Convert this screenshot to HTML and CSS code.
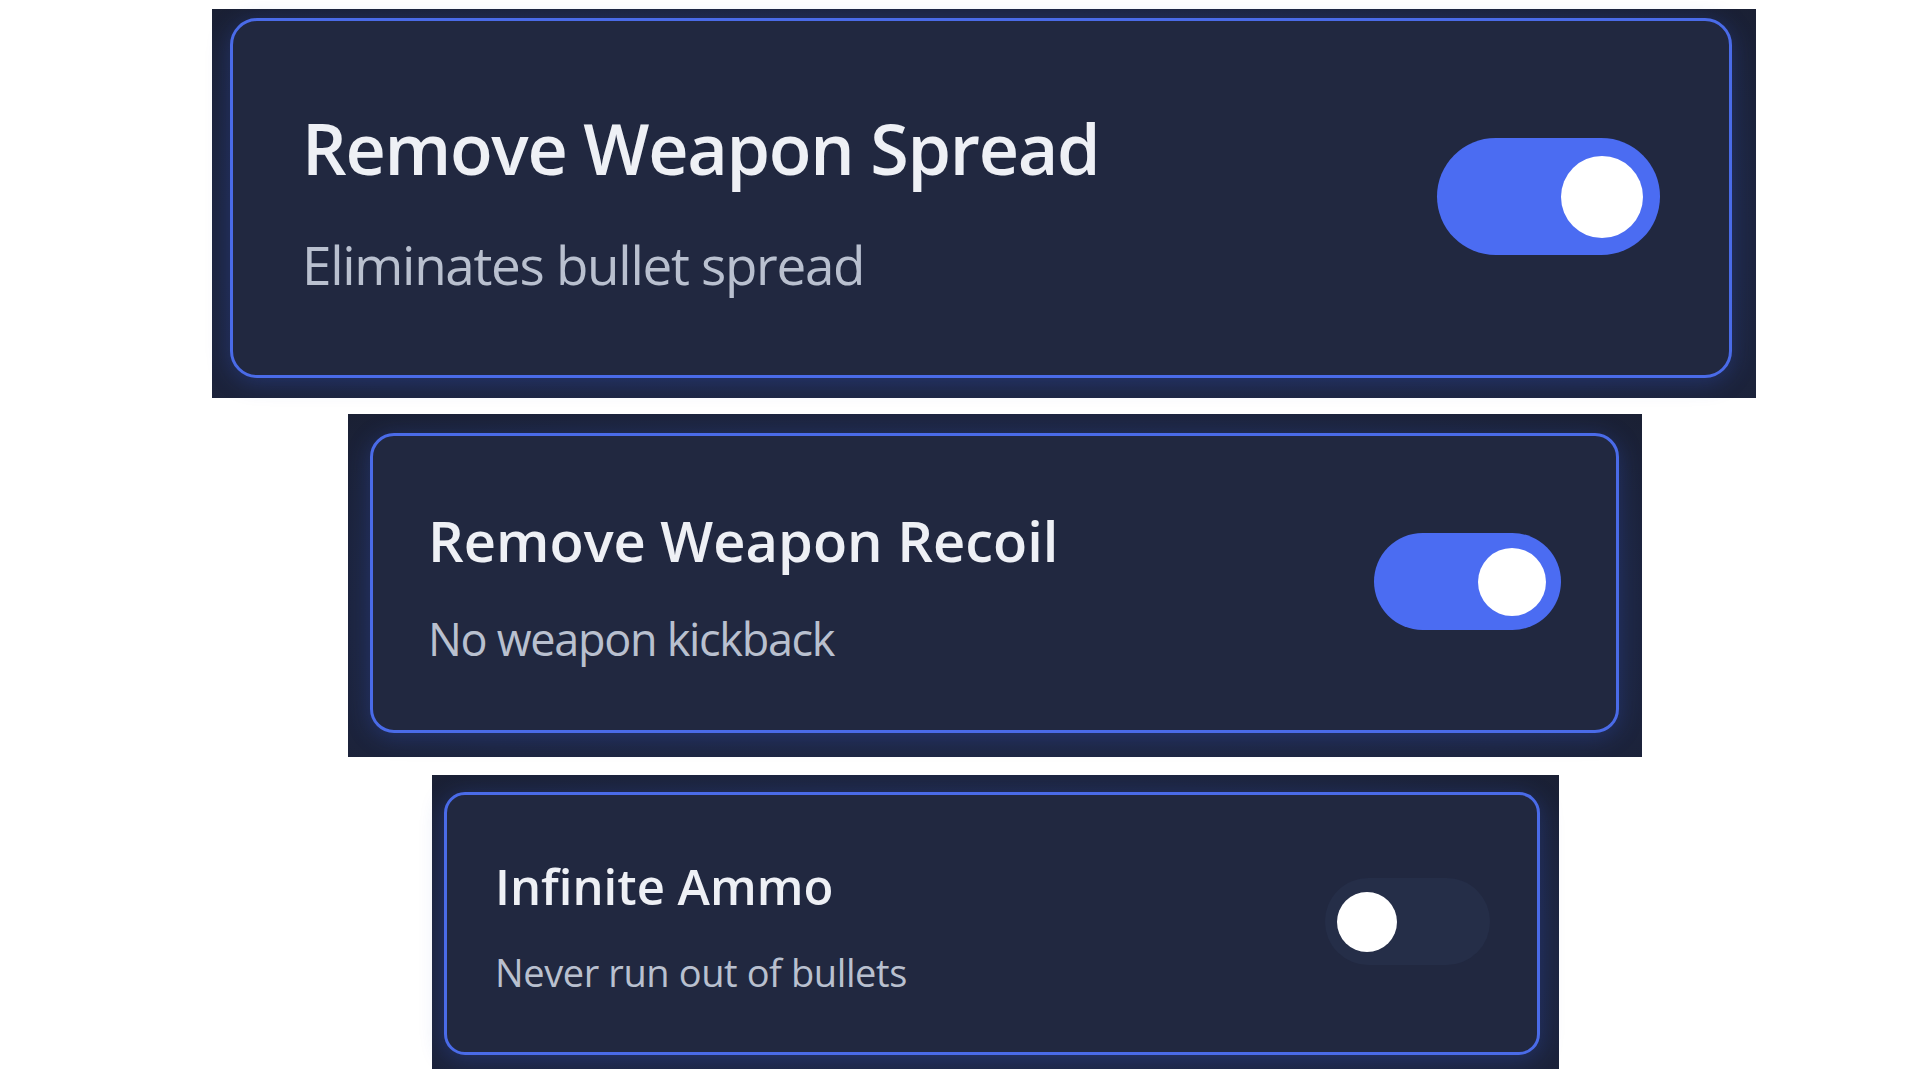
FILE: index.html
```html
<!DOCTYPE html>
<html lang="en">
<head>
    <meta charset="UTF-8">
    <meta name="viewport" content="width=device-width, initial-scale=1.0">
    <link rel="stylesheet" href="styles.css">
</head>
<body>
    <div class="shots">
        <!-- large crop -->
        <div class="frame frame-lg">
            <div class="option-card">
                <div class="option-text">
                    <div class="option-title">Remove Weapon Spread</div>
                    <div class="option-desc">Eliminates bullet spread</div>
                </div>
                <span class="toggle on"><span class="knob"></span></span>
            </div>
        </div>

        <!-- medium crop -->
        <div class="frame frame-md">
            <div class="option-card">
                <div class="option-text">
                    <div class="option-title">Remove Weapon Recoil</div>
                    <div class="option-desc">No weapon kickback</div>
                </div>
                <span class="toggle on"><span class="knob"></span></span>
            </div>
        </div>

        <!-- small crop -->
        <div class="frame frame-sm">
            <div class="option-card">
                <div class="option-text">
                    <div class="option-title">Infinite Ammo</div>
                    <div class="option-desc">Never run out of bullets</div>
                </div>
                <span class="toggle"><span class="knob"></span></span>
            </div>
        </div>
    </div>
</body>
</html>
```

FILE: styles.css
```css
body {
    margin: 0;
    background: #ffffff;
    font-family: "Open Sans", "Noto Sans", sans-serif;
}

.shots {
    display: flex;
    flex-direction: column;
    align-items: flex-start;
    padding-top: 9px;
}

.frame {
    background: radial-gradient(ellipse at 50% 60%, #202a4a 0%, #1d2540 70%, #1a2034 100%);
}

.option-card {
    box-sizing: border-box;
    display: flex;
    align-items: center;
    justify-content: space-between;
    background: #212840;
    border: 3px solid #4a6be8;
    box-shadow: 0 4px 22px rgba(50, 80, 190, 0.35);
}

.option-title {
    color: #eef0f5;
    font-weight: 600;
    line-height: 1.2;
}

.option-desc {
    color: #b9c0cf;
    line-height: 1.2;
}

.toggle {
    box-sizing: border-box;
    display: flex;
    align-items: center;
    justify-content: flex-start;
    background: #252e48;
    border-radius: 999px;
}

.toggle.on {
    justify-content: flex-end;
    background: #4b6cf2;
}

.knob {
    display: block;
    background: #ffffff;
    border-radius: 50%;
}

/* large crop */
.frame-lg {
    margin-left: 212px;
    padding: 9px 24px 20px 18px;
}

.frame-lg .option-card {
    width: 1502px;
    height: 360px;
    border-radius: 27px;
    padding: 0 69px 0 69px;
}

.frame-lg .option-text {
    margin-top: 6px;
}

.frame-lg .option-title {
    font-size: 70px;
    letter-spacing: -1.3px;
}

.frame-lg .option-desc {
    font-size: 53px;
    letter-spacing: -1.3px;
    margin-top: 43px;
}

.frame-lg .toggle {
    width: 223px;
    height: 117px;
    padding: 0 17px;
    margin-top: -3px;
}

.frame-lg .knob {
    width: 82px;
    height: 82px;
}

/* medium crop */
.frame-md {
    margin-left: 348px;
    margin-top: 16px;
    padding: 19px 23px 24px 22px;
}

.frame-md .option-card {
    width: 1249px;
    height: 300px;
    border-radius: 24px;
    padding: 0 55px 0 55px;
}

.frame-md .option-text {
    margin-top: 7px;
}

.frame-md .option-title {
    font-size: 56px;
}

.frame-md .option-desc {
    font-size: 45px;
    letter-spacing: -1.3px;
    margin-top: 37px;
}

.frame-md .toggle {
    width: 187px;
    height: 97px;
    padding: 0 15px;
    margin-top: -3px;
}

.frame-md .knob {
    width: 68px;
    height: 68px;
}

/* small crop */
.frame-sm {
    margin-left: 432px;
    margin-top: 18px;
    padding: 17px 19px 14px 12px;
}

.frame-sm .option-card {
    width: 1096px;
    height: 263px;
    border-radius: 21px;
    padding: 0 47px 0 48px;
}

.frame-sm .option-text {
    margin-top: 5px;
}

.frame-sm .option-title {
    font-size: 49px;
}

.frame-sm .option-desc {
    font-size: 38px;
    letter-spacing: -0.4px;
    margin-top: 34px;
}

.frame-sm .toggle {
    width: 165px;
    height: 87px;
    padding: 0 12px;
    margin-top: -4px;
}

.frame-sm .knob {
    width: 60px;
    height: 60px;
}
```
